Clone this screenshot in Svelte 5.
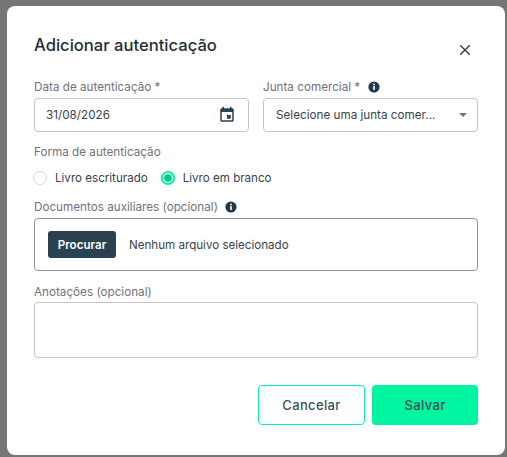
<script lang="ts">
  let forma = $state('branco');
</script>

<div class="backdrop">
  <div class="modal">
    <header>
      <h2>Adicionar autenticação</h2>
      <button class="close" aria-label="Fechar">
        <svg width="12" height="12" viewBox="0 0 12 12"><path d="M1.2 1.2 10.8 10.8M10.8 1.2 1.2 10.8" stroke="#2a4250" stroke-width="1.4" fill="none" /></svg>
      </button>
    </header>

    <div class="row">
      <div class="field">
        <div class="label">Data de autenticação *</div>
        <div class="input">
          <span>31/08/2026</span>
          <svg width="18" height="18" viewBox="0 0 24 24"><path fill="#2a4250" d="M17 12h-5v5h5v-5zM16 1v2H8V1H6v2H5c-1.1 0-2 .9-2 2v14c0 1.1.9 2 2 2h14c1.1 0 2-.9 2-2V5c0-1.1-.9-2-2-2h-1V1h-2zm3 18H5V8h14v11z" /></svg>
        </div>
      </div>
      <div class="field">
        <div class="label">Junta comercial *
          <svg class="info" width="12" height="12" viewBox="0 0 12 12"><circle cx="6" cy="6" r="5.6" fill="#1f3a4a" /><rect x="5.2" y="5" width="1.6" height="4" fill="#fff" /><rect x="5.2" y="2.7" width="1.6" height="1.5" fill="#fff" /></svg>
        </div>
        <div class="input select">
          <span>Selecione uma junta comer...</span>
          <i class="caret"></i>
        </div>
      </div>
    </div>

    <div class="label forma">Forma de autenticação</div>
    <div class="radios">
      <button class="radio" onclick={() => (forma = 'escriturado')}>
        <span class="dot" class:on={forma === 'escriturado'}></span>Livro escriturado
      </button>
      <button class="radio" onclick={() => (forma = 'branco')}>
        <span class="dot" class:on={forma === 'branco'}></span>Livro em branco
      </button>
    </div>

    <div class="label docs">Documentos auxiliares (opcional)
      <svg class="info" width="12" height="12" viewBox="0 0 12 12"><circle cx="6" cy="6" r="5.6" fill="#1f3a4a" /><rect x="5.2" y="5" width="1.6" height="4" fill="#fff" /><rect x="5.2" y="2.7" width="1.6" height="1.5" fill="#fff" /></svg>
    </div>
    <div class="file">
      <button class="browse">Procurar</button>
      <span>Nenhum arquivo selecionado</span>
    </div>

    <div class="label notes">Anotações (opcional)</div>
    <textarea></textarea>

    <footer>
      <button class="btn cancel">Cancelar</button>
      <button class="btn save">Salvar</button>
    </footer>
  </div>
</div>

<style>
  :global(body) {
    margin: 0;
    background: #777;
  }
  .backdrop {
    height: 457px;
    padding: 6px 2px 2px 7px;
    box-sizing: border-box;
    background: #767676;
    font-family: Inter, "Open Sans", sans-serif;
    overflow: hidden;
  }
  .modal {
    width: 498px;
    height: 449px;
    box-sizing: border-box;
    background: #fff;
    border-radius: 8px;
    padding: 29px 27px 0;
    color: #2a3d48;
  }
  header {
    display: flex;
    justify-content: space-between;
    align-items: flex-start;
    height: 44px;
  }
  h2 {
    margin: 0;
    font-size: 16.6px;
    line-height: 20px;
    font-weight: 500;
    color: #232f36;
  }
  .close {
    border: none;
    background: none;
    padding: 0;
    margin: 9px 7px 0 0;
    width: 12px;
    height: 12px;
    display: flex;
  }
  .row {
    display: grid;
    grid-template-columns: 215px 215px;
    gap: 14px;
  }
  .label {
    font-size: 11.7px;
    line-height: 16px;
    color: #70727f;
    display: flex;
    align-items: center;
    height: 16px;
  }
  .info {
    margin-left: 8px;
  }
  .input {
    margin-top: 3px;
    height: 34px;
    box-sizing: border-box;
    border: 1px solid #c4c4c4;
    border-radius: 4px;
    display: flex;
    align-items: center;
    justify-content: space-between;
    padding: 0 12px 0 11px;
    font-size: 11.7px;
    color: #37444c;
  }
  .select {
    padding: 0 10px 0 12px;
  }
  .caret {
    width: 0;
    height: 0;
    border-left: 4px solid transparent;
    border-right: 4px solid transparent;
    border-top: 4px solid #6b7280;
  }
  .forma {
    margin-top: 12px;
  }
  .radios {
    display: flex;
    gap: 13px;
    margin-top: 9px;
    margin-left: -1px;
    height: 18px;
  }
  .radio {
    border: none;
    background: none;
    padding: 0;
    display: flex;
    align-items: center;
    gap: 8px;
    font: inherit;
    font-size: 11.6px;
    color: #37444c;
  }
  .dot {
    width: 14px;
    height: 14px;
    box-sizing: border-box;
    border: 1px solid #d4d7da;
    border-radius: 50%;
    display: block;
    background: #fff;
  }
  .dot.on {
    border: 2px solid #00f5a0;
    background: radial-gradient(circle, #05c98a 0 3.5px, #fff 4px);
  }
  .docs {
    margin-top: 12px;
  }
  .docs .info {
    margin-left: 7px;
  }
  .file {
    margin-top: 3px;
    height: 53px;
    box-sizing: border-box;
    border: 1px solid #8f969c;
    border-radius: 4px;
    display: flex;
    align-items: center;
    gap: 13px;
    padding: 0 13px;
    font-size: 11.6px;
    color: #37444c;
  }
  .browse {
    width: 68px;
    height: 27px;
    border: none;
    border-radius: 3px;
    background: #2a4250;
    color: #fff;
    font: inherit;
    font-size: 11.6px;
    font-weight: 600;
    padding: 0;
  }
  .notes {
    margin-top: 13px;
  }
  textarea {
    display: block;
    margin-top: 2px;
    width: 444px;
    height: 56px;
    box-sizing: border-box;
    border: 1px solid #c4c4c4;
    border-radius: 4px;
    resize: none;
    padding: 0;
    outline: none;
  }
  footer {
    display: flex;
    justify-content: flex-end;
    gap: 7px;
    margin-top: 27px;
  }
  .btn {
    width: 107px;
    height: 40px;
    box-sizing: border-box;
    border-radius: 4px;
    font: inherit;
    font-size: 13px;
    font-weight: 500;
    letter-spacing: 0.35px;
    color: #3b4f5a;
    padding: 0;
  }
  .cancel {
    background: #fff;
    border: 1px solid #00f5a0;
  }
  .save {
    width: 106px;
    background: #00f5a0;
    border: none;
  }
</style>
